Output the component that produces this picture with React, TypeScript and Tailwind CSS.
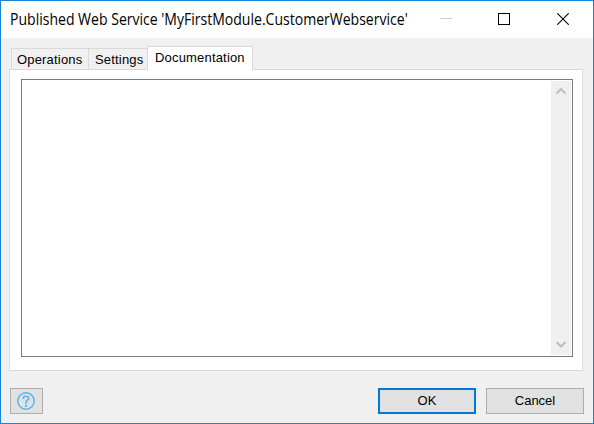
import React from "react";

function TitleBar() {
  return (
    <header className="flex h-[37px] shrink-0 items-start justify-between bg-white pl-[9px]">
      <h1 className="mt-[8px] w-[400px] origin-left scale-x-[0.877] whitespace-nowrap font-['Open_Sans',sans-serif] text-[16px] leading-[20px] text-black">
        Published Web Service 'MyFirstModule.CustomerWebservice'
      </h1>
      <div className="flex pt-3 pr-[24px]">
        <svg className="mr-[46px] h-3 w-3" viewBox="0 0 12 12" shapeRendering="crispEdges">
          <rect x="0" y="5" width="12" height="1" fill="#cccccc" />
        </svg>
        <svg className="mr-[47px] h-3 w-3" viewBox="0 0 12 12" shapeRendering="crispEdges">
          <rect x="0.5" y="0.5" width="11" height="11" fill="none" stroke="#000" />
        </svg>
        <svg className="h-3 w-3" viewBox="0 0 12 12">
          <path d="M0.3 0.3 11.7 11.7M11.7 0.3 0.3 11.7" stroke="#000" strokeWidth="1.1" />
        </svg>
      </div>
    </header>
  );
}

function Tabs() {
  return (
    <div role="tablist" className="z-10 -mb-px ml-[10px] flex h-6 items-end text-[13px] leading-[15px] tracking-[0.18px]">
      <button className="mb-px flex h-[21px] w-[77px] border-t border-l border-[#d9d9d9] bg-[#f0f0f0] pt-[3px] pl-[5px]">Operations</button>
      <button className="mb-px flex h-[21px] w-[59px] border-t border-l border-[#d9d9d9] bg-[#f0f0f0] pt-[3px] pl-[6px]">Settings</button>
      <button className="flex h-6 w-[106px] border-x border-t border-[#d9d9d9] bg-white pt-[3px] pl-[7px]">Documentation</button>
    </div>
  );
}

function Arrow({ down = false }: { down?: boolean }) {
  return (
    <svg className="mr-px h-2 w-[10px]" viewBox="0 0 10 8">
      <path d={down ? "M0.5 1 5 5.5 9.5 1" : "M0.5 6.5 5 2 9.5 6.5"} fill="none" stroke="#bfbfbf" strokeWidth="2.2" />
    </svg>
  );
}

export default function App() {
  return (
    <main className="flex h-[424px] w-[594px] flex-col overflow-hidden border border-[#1883d7] bg-[#f0f0f0] font-['Liberation_Sans',Arial,sans-serif] text-black">
      <TitleBar />
      <section className="mt-2 flex flex-col">
        <Tabs />
        <div className="ml-2 h-[302px] w-[574px] border border-[#d9d9d9] bg-white pt-[9px] pl-[11px]">
          <div className="flex h-[278px] w-[552px] justify-end border border-[#7a7a7a] bg-white p-px">
            <div className="flex w-5 flex-col items-center justify-between bg-[#f0f0f0] pt-[6px] pb-[6px]">
              <Arrow />
              <Arrow down />
            </div>
          </div>
        </div>
      </section>
      <footer className="mt-[17px] flex pl-[9px] text-[13px] leading-[15px]">
        <button aria-label="Help" className="flex h-[26px] w-[33px] items-center justify-center border border-[#adadad] bg-[#e1e1e1]">
          <svg className="mr-px h-[18px] w-[18px]" viewBox="0 0 18 18" fill="none" stroke="#56b4f2">
            <circle cx="9" cy="9" r="8.2" strokeWidth="1.5" />
            <path d="M6.4 7V6.3C6.4 4.9 7.4 4.2 9 4.2s2.7.8 2.7 2.2C11.7 8.2 9 8.2 9 10.2v1.6" strokeWidth="1.6" />
            <path d="M9 12.8v2" strokeWidth="2.2" />
          </svg>
        </button>
        <button className="ml-[335px] flex h-[26px] w-[98px] justify-center border-2 border-[#0078d7] bg-[#e1e1e1] pt-[3px]">OK</button>
        <button className="ml-[10px] flex h-[26px] w-[98px] justify-center border border-[#adadad] bg-[#e1e1e1] pt-1">Cancel</button>
      </footer>
    </main>
  );
}
